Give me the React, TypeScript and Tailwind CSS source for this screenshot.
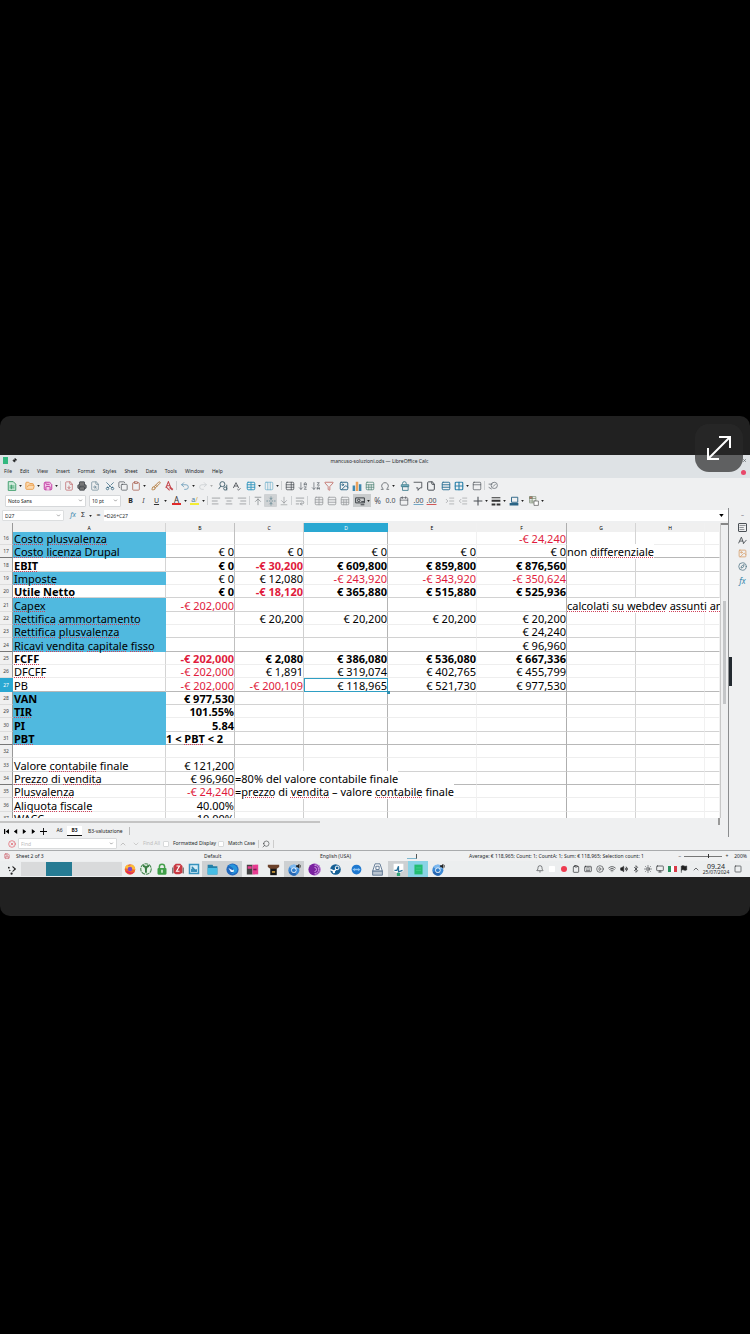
import React from "react";
import type { ReactNode } from "react";
import {
  AArrowDown, ArrowDownAZ, ArrowDownZA, Bell, Bluetooth, Brush, Calendar, ChevronDown, ChevronUp,
  CircleX, Clipboard, Compass, Copy, File, FileDown, FileSearch, Flag, FolderOpen, Funnel, Grid2x2, Image,
  IndentDecrease, IndentIncrease, MessageSquare, Monitor, Omega, PanelTop, Pin, Printer, Redo2,
  Save, Scissors, Search, SpellCheck, Square, Sun, Table, TableProperties, TextAlignCenter,
  TextAlignEnd, TextAlignStart, Undo2, Volume2, Wifi, WrapText, X, Columns3, Keyboard, Sheet, Rows3, ArrowUpToLine,
  ArrowDownToLine, FoldVertical, CirclePlay,
} from "lucide-react";

type Cell = { t: string; red?: boolean; left?: boolean };
type RowData = { n: number; label: string; bold?: boolean; blue?: boolean; line?: "mid" | "dark"; cells: (string | null)[] };

const rows: RowData[] = [
  { n: 16, label: "_Costo_ _plusvalenza_", blue: true, cells: [null, null, null, null, "-€ 24,240", null] },
  { n: 17, label: "_Costo_ _licenza_ Drupal", blue: true, line: "dark", cells: ["€ 0", "€ 0", "€ 0", "€ 0", "€ 0", "non _differenziale_"] },
  { n: 18, label: "_EBIT_", bold: true, line: "mid", cells: ["€ 0", "-€ 30,200", "€ 609,800", "€ 859,800", "€ 876,560", null] },
  { n: 19, label: "_Imposte_", blue: true, cells: ["€ 0", "€ 12,080", "-€ 243,920", "-€ 343,920", "-€ 350,624", null] },
  { n: 20, label: "_Utile_ _Netto_", bold: true, line: "mid", cells: ["€ 0", "-€ 18,120", "€ 365,880", "€ 515,880", "€ 525,936", null] },
  { n: 21, label: "_Capex_", blue: true, line: "mid", cells: ["-€ 202,000", null, null, null, null, "_calcolati_ _su_ _webdev_ _assunti_ _annualmente_"] },
  { n: 22, label: "_Rettifica_ _ammortamento_", blue: true, cells: [null, "€ 20,200", "€ 20,200", "€ 20,200", "€ 20,200", null] },
  { n: 23, label: "_Rettifica_ _plusvalenza_", blue: true, line: "mid", cells: [null, null, null, null, "€ 24,240", null] },
  { n: 24, label: "_Ricavi_ _vendita_ _capitale_ _fisso_", blue: true, line: "dark", cells: [null, null, null, null, "€ 96,960", null] },
  { n: 25, label: "_FCFF_", bold: true, cells: ["-€ 202,000", "€ 2,080", "€ 386,080", "€ 536,080", "€ 667,336", null] },
  { n: 26, label: "_DFCFF_", cells: ["-€ 202,000", "€ 1,891", "€ 319,074", "€ 402,765", "€ 455,799", null] },
  { n: 27, label: "PB", line: "dark", cells: ["-€ 202,000", "-€ 200,109", "€ 118,965", "€ 521,730", "€ 977,530", null] },
  { n: 28, label: "VAN", bold: true, blue: true, line: "mid", cells: ["€ 977,530", null, null, null, null, null] },
  { n: 29, label: "_TIR_", bold: true, blue: true, cells: ["101.55%", null, null, null, null, null] },
  { n: 30, label: "PI", bold: true, blue: true, line: "mid", cells: ["5.84", null, null, null, null, null] },
  { n: 31, label: "_PBT_", bold: true, blue: true, line: "dark", cells: ["1 < _PBT_ < 2", null, null, null, null, null] },
  { n: 32, label: "", cells: [null, null, null, null, null, null] },
  { n: 33, label: "Valore _contabile_ finale", line: "mid", cells: ["€ 121,200", null, null, null, null, null] },
  { n: 34, label: "_Prezzo_ di _vendita_", line: "dark", cells: ["€ 96,960", "=80% del _valore_ _contabile_ finale", null, null, null, null] },
  { n: 35, label: "_Plusvalenza_", cells: ["-€ 24,240", "=_prezzo_ di _vendita_ – valore _contabile_ finale", null, null, null, null] },
  { n: 36, label: "_Aliquota_ _fiscale_", cells: ["40.00%", null, null, null, null, null] },
  { n: 37, label: "_WACC_", cells: ["10.00%", null, null, null, null, null] },
];

const columns = [
  { name: "A", edge: "border-r-[#d4d4d4]" },
  { name: "B", edge: "border-r-[#c0c0c0]" },
  { name: "C", edge: "border-r-[#cfcfcf]" },
  { name: "D", edge: "border-r-[#b4b4b4]" },
  { name: "E", edge: "border-r-[#f1f1f1]" },
  { name: "F", edge: "border-r-[#aeaeae]" },
  { name: "G", edge: "border-r-[#d4d4d4]" },
  { name: "H", edge: "border-r-[#f1f1f1]" },
  { name: "", edge: "border-r-[#f1f1f1]" },
];

function Spelled({ text }: { text: string }) {
  return (
    <>
      {text.split("_").map((part, i) =>
        i % 2 ? (
          <span key={i} className="underline decoration-[#d0405a] decoration-dotted decoration-1 underline-offset-1">{part}</span>
        ) : (
          part
        ),
      )}
    </>
  );
}

function Caret({ dim }: { dim?: boolean }) {
  return (
    <button aria-label="More options" className="flex w-[5px] items-center justify-center">
      <svg viewBox="0 0 4 3" className={dim ? "h-[2px] w-[3px] text-[#aaa]" : "h-[2px] w-[3px] text-[#222]"}>
        <path d="M0 0h4L2 3z" fill="currentColor" />
      </svg>
    </button>
  );
}

function Tool({ name, children, color = "text-[#4a4f55]", active }: { name: string; children: ReactNode; color?: string; active?: boolean }) {
  return (
    <button
      aria-label={name}
      className={`flex h-[13px] w-[13px] shrink-0 items-center justify-center text-[8px] leading-none [&>svg]:size-[10px] ${color} ${active ? "rounded-[1px] bg-[#cfd2d4]" : ""}`}
    >
      {children}
    </button>
  );
}

function Group({ children, wide }: { children: ReactNode; wide?: boolean }) {
  return <div className={wide ? "ml-[3px] flex items-center" : "flex items-center"}>{children}</div>;
}

function Rule() {
  return <span className="-mx-px h-[9px] w-px shrink-0 bg-[#cdd0d2]" />;
}

function StandardBar() {
  return (
    <div className="flex h-[15px] items-center gap-0.5 pl-[5px]">
      <Group>
        <Tool name="New" color="text-[#3f9e6c]">
          <svg viewBox="0 0 16 16" fill="none" stroke="currentColor" strokeWidth="1.5"><path d="M2 1h8l4 4v10H2z" fill="#cfeadb" /><path d="M4 8h8M4 11h8M7 6v7" /></svg>
        </Tool>
        <Caret />
        <Tool name="Open" color="text-[#e8953c]"><FolderOpen fill="#fbd9ae" /></Tool>
        <Caret />
        <Tool name="Save" color="text-[#c43fa5]"><Save fill="#f3cdea" strokeWidth={2.4} /></Tool>
        <Caret />
      </Group>
      <Rule />
      <Group>
        <Tool name="Export as PDF" color="text-[#b9595c]"><FileDown strokeWidth={1.6} /></Tool>
        <Tool name="Print" color="text-[#42474c]"><Printer fill="#777" /></Tool>
        <Tool name="Print preview" color="text-[#64808f]"><FileSearch strokeWidth={1.6} /></Tool>
      </Group>
      <Group>
        <Tool name="Cut" color="text-[#34647e]"><Scissors className="-rotate-90" strokeWidth={1.8} /></Tool>
        <Tool name="Copy"><Copy strokeWidth={1.7} /></Tool>
        <Tool name="Paste" color="text-[#a75b4a]"><Clipboard strokeWidth={1.8} /></Tool>
        <Caret />
      </Group>
      <Group>
        <Tool name="Clone formatting" color="text-[#b3793a]"><Brush strokeWidth={2.2} /></Tool>
        <Tool name="Clear formatting" color="text-[#c5484e]">
          <svg viewBox="0 0 16 16" fill="none" stroke="currentColor" strokeWidth="1.700"><path d="M3 11 7 1l4 10M4.500 7.500h5" /><path d="M9 15 3 9" /><path d="M9 10l5 4" strokeWidth="3" /></svg>
        </Tool>
      </Group>
      <Rule />
      <Group>
        <Tool name="Undo" color="text-[#5c93b4]"><Undo2 strokeWidth={1.8} /></Tool>
        <Caret />
        <Tool name="Redo" color="text-[#c3c7ca]"><Redo2 strokeWidth={1.6} /></Tool>
        <Caret dim />
      </Group>
      <Group>
        <Tool name="Find and replace" color="text-[#446270]">
          <svg viewBox="0 0 16 16" fill="none" stroke="currentColor" strokeWidth="1.500"><circle cx="7" cy="5" r="4" /><path d="M4.500 8 1 13" /><circle cx="11.500" cy="12" r="2.500" /><path d="M14 6v9" /></svg>
        </Tool>
        <Tool name="Spelling"><SpellCheck strokeWidth={2} /></Tool>
      </Group>
      <Group>
        <Tool name="Rows" color="text-[#3d9ac0]"><Table strokeWidth={2.4} /></Tool>
        <Caret />
        <Tool name="Columns" color="text-[#64aac8]"><Columns3 strokeWidth={1.5} /></Tool>
        <Caret />
      </Group>
      <Rule />
      <Group>
        <Tool name="Sort"><TableProperties strokeWidth={1.8} /></Tool>
        <Tool name="Sort ascending" color="text-[#5d656b]"><ArrowDownAZ strokeWidth={1.7} /></Tool>
        <Tool name="Sort descending" color="text-[#5d656b]"><ArrowDownZA strokeWidth={1.7} /></Tool>
        <Tool name="AutoFilter" color="text-[#bb5a52]"><Funnel strokeWidth={1.8} /></Tool>
      </Group>
      <Group>
        <Tool name="Insert image" color="text-[#346c8a]"><Image strokeWidth={2.4} /></Tool>
        <Tool name="Insert chart" color="text-[#3d88b0]">
          <svg viewBox="0 0 16 16"><path d="M1 7h4v9H1z" fill="currentColor" /><path d="M6 1h4v15H6z" fill="#e8a15c" /><path d="M11 5h4v11h-4z" fill="currentColor" /></svg>
        </Tool>
        <Tool name="Pivot table" color="text-[#538879]"><Sheet strokeWidth={1.8} /></Tool>
      </Group>
      <Group>
        <Tool name="Special character"><Omega strokeWidth={1.7} /></Tool>
        <Caret />
      </Group>
      <Group>
        <Tool name="Hyperlink" color="text-[#4a8494]">
          <svg viewBox="0 0 16 16" fill="none" stroke="currentColor" strokeWidth="1.500"><path d="M4 6V4a3 3 0 0 1 6 0v2" /><path d="M2 6h12v3H2z" fill="#7fb8c4" /><path d="M4 9h9v6H4z" /></svg>
        </Tool>
        <Tool name="Comment">
          <svg viewBox="0 0 16 16" fill="none" stroke="currentColor" strokeWidth="1.400"><path d="M1 2h13v9h-3l-3 4v-4H5" /></svg>
        </Tool>
        <Tool name="Headers and footers"><File strokeWidth={2.4} /></Tool>
      </Group>
      <Group>
        <Tool name="Print area" color="text-[#39789b]"><Rows3 strokeWidth={2.4} /></Tool>
        <Tool name="Freeze rows and columns" color="text-[#2f83ab]"><Grid2x2 strokeWidth={2.8} /></Tool>
        <Caret />
        <Tool name="Split window"><PanelTop strokeWidth={1.6} /></Tool>
      </Group>
      <Rule />
      <Tool name="Draw functions" color="text-[#6b7379]">
        <svg viewBox="0 0 16 16" fill="none" stroke="currentColor" strokeWidth="1.300"><circle cx="10" cy="7" r="5" /><path d="M1 5h6M1 10l5 3M8 9l4-4" /></svg>
      </Tool>
    </div>
  );
}

function FormattingBar() {
  return (
    <div className="flex h-[15px] items-center gap-0.5 pl-[5px] text-[#222]">
      <label className="mr-px flex h-[12px] w-[81px] items-center rounded-[1px] border border-[#d6d8da] bg-white px-0.5">
        <input aria-label="Font name" defaultValue="Noto Sans" className="w-full min-w-0 text-[5px] leading-[8px] outline-none" />
        <ChevronDown className="size-[5px] shrink-0" />
      </label>
      <label className="mr-px flex h-[12px] w-[32px] items-center rounded-[1px] border border-[#d6d8da] bg-white px-0.5">
        <input aria-label="Font size" defaultValue="10 pt" className="w-full min-w-0 text-[5px] leading-[8px] outline-none" />
        <ChevronDown className="size-[5px] shrink-0" />
      </label>
      <Group>
        <Tool name="Bold" color="font-bold text-[#222]"><span className="text-[7px]">B</span></Tool>
        <Tool name="Italic" color="italic text-[#444]"><span className="text-[7px]">I</span></Tool>
        <Tool name="Underline" color="text-[#333] underline"><span className="text-[7px]">U</span></Tool>
        <Caret />
      </Group>
      <Group>
        <Tool name="Font color" color="text-[#333]"><span className="border-b-2 border-[#e02a2a] px-0.5 leading-[7px]">A</span></Tool>
        <Caret />
        <Tool name="Highlighting" color="text-[#4778a0]"><span className="border-b-2 border-[#f3ec33] px-px text-[7px] leading-[7px]">a<span className="text-[#d6a63a]">/</span></span></Tool>
        <Caret />
      </Group>
      <Rule />
      <Group>
        <Tool name="Align left" color="text-[#8a8e91]"><TextAlignStart strokeWidth={1.8} /></Tool>
        <Tool name="Align center" color="text-[#8a8e91]"><TextAlignCenter strokeWidth={1.8} /></Tool>
        <Tool name="Align right" color="text-[#8a8e91]"><TextAlignEnd strokeWidth={1.8} /></Tool>
      </Group>
      <Rule />
      <Group>
        <Tool name="Align top" color="text-[#7a7f83]"><ArrowUpToLine strokeWidth={1.7} /></Tool>
        <Tool name="Center vertically" active color="text-[#5a7f8c]"><FoldVertical strokeWidth={1.7} /></Tool>
        <Tool name="Align bottom" color="text-[#7a7f83]"><ArrowDownToLine strokeWidth={1.3} /></Tool>
      </Group>
      <Rule />
      <Tool name="Wrap text" color="text-[#7a7f83]"><WrapText strokeWidth={1.6} /></Tool>
      <Rule />
      <Group wide>
        <Tool name="Merge and center cells" color="text-[#9a9da0]"><Table strokeWidth={2} /></Tool>
        <Tool name="Merge cells" color="text-[#9a9da0]"><Rows3 strokeWidth={2} /></Tool>
        <Tool name="Unmerge cells" color="text-[#9a9da0]"><Sheet strokeWidth={2} /></Tool>
      </Group>
      <Group>
        <div className="flex bg-[#c9cccd]">
          <Tool name="Format as currency" color="text-[#3c4145]">
            <svg viewBox="0 0 16 16" fill="none" stroke="currentColor" strokeWidth="1.6"><path d="M1 3h14v8H1z" /><circle cx="6" cy="7" r="2" /><path d="M9 14h6M10 9h5" /></svg>
          </Tool>
          <Caret />
        </div>
        <Tool name="Format as percent" color="text-[#4a4f55]">%</Tool>
        <Tool name="Format as number" color="text-[#4a4f55]"><span className="text-[7px]">0.0</span></Tool>
        <Tool name="Format as date"><Calendar strokeWidth={1.6} /></Tool>
      </Group>
      <Group>
        <Tool name="Add decimal place"><span className="text-[7px] underline decoration-[#71a7c4]">.00</span></Tool>
        <Tool name="Delete decimal place"><span className="text-[7px] underline decoration-[#d05858]">.00</span></Tool>
      </Group>
      <Group wide>
        <Tool name="Increase indent" color="text-[#9a9da0]"><IndentIncrease strokeWidth={1.6} /></Tool>
        <Tool name="Decrease indent" color="text-[#9a9da0]"><IndentDecrease strokeWidth={1.6} /></Tool>
      </Group>
      <Group>
        <Tool name="Borders"><svg viewBox="0 0 16 16" stroke="currentColor" strokeWidth="1.7"><path d="M8 1v14M1 8h14" /></svg></Tool>
        <Caret />
        <Tool name="Border style" color="text-[#333]"><svg viewBox="0 0 16 16" fill="currentColor"><path d="M1 2h14v1.500H1zM1 6h14v3H1zM1 12h6v3H1zM9 12h6v3H9z" /></svg></Tool>
        <Caret />
        <Tool name="Background color" color="text-[#2b6485]"><svg viewBox="0 0 16 16" fill="none" stroke="currentColor"><path d="M4 2h10v8H4z" strokeWidth="1.5" /><path d="M1 13h14" strokeWidth="4" /></svg></Tool>
        <Caret />
      </Group>
      <Group>
        <Tool name="Conditional formatting" color="text-[#6a7d5f]"><svg viewBox="0 0 16 16" fill="none" stroke="currentColor"><path d="M1 1h10v10H1zM1 4h10M1 8h10M5 1v10" /><path d="M1 1h4v3H1z" fill="#d67171" /><path d="M8 8h7v7H8z" fill="#fff" stroke="#444" /></svg></Tool>
        <Caret />
      </Group>
    </div>
  );
}

function FormulaBar() {
  return (
    <div className="flex h-[15px] items-center gap-0.5 pl-0.5 text-[5px]">
      <label className="flex h-[11px] w-[62px] items-center rounded-[1px] border border-[#dcdedf] bg-white px-0.5">
        <input aria-label="Cell reference" defaultValue="D27" className="w-full min-w-0 leading-[8px] outline-none" />
        <ChevronDown className="size-[5px] shrink-0" />
      </label>
      <button aria-label="Function wizard" className="w-[12px] pl-0.5 text-[7px] italic text-[#3b88ae]">fx</button>
      <button aria-label="Sum" className="w-[6px] text-[7px]">Σ</button>
      <Caret />
      <button aria-label="Formula" className="w-[7px] text-[7px]">=</button>
      <label className="flex h-[11px] grow items-center bg-white">
        <input aria-label="Formula input" defaultValue="=D26+C27" className="w-full leading-[8px] outline-none" />
        <svg viewBox="0 0 6 4" className="mx-1 h-[3px] w-[5px]"><path d="M0 0h6L3 4z" /></svg>
      </label>
    </div>
  );
}

function toCell(text: string, col: number): Cell {
  return { t: text, red: text.startsWith("-"), left: col === 5 || text.startsWith("=") || text.startsWith("1 <") };
}

function Grid() {
  return (
    <div className="h-[295px] min-w-0 grow overflow-hidden bg-white">
      <table className="w-full table-fixed border-separate border-spacing-0 text-[11px] leading-[10px] text-black">
        <colgroup>
          <col className="w-[13px]" />
          <col className="w-[153px]" />
          <col className="w-[69px]" />
          <col className="w-[69px]" />
          <col className="w-[84px]" />
          <col className="w-[89px]" />
          <col className="w-[90px]" />
          <col className="w-[69px]" />
          <col className="w-[69px]" />
          <col />
        </colgroup>
        <thead>
          <tr className="h-[9px] bg-[#f0f0f0] text-[5px] leading-[8px]">
            <th className="border-r border-r-[#999] p-0" />
            {columns.map((c, i) => (
              <th key={i} scope="col" className={c.name === "D" ? "bg-[#2aa8d2] p-0 font-normal text-white" : `border-r p-0 font-normal ${c.edge}`}>{c.name}</th>
            ))}
          </tr>
        </thead>
        <tbody>
          {rows.map((r, ri) => {
            const line = r.line === "dark" ? "border-b-[#b8b8b8]" : r.line === "mid" ? "border-b-[#d2d2d2]" : "border-b-[#eeeeee]";
            return (
              <tr key={r.n} className={ri % 3 === 2 ? "h-[14px]" : "h-[13px]"}>
                <th scope="row" className={`border-r border-b p-0 text-[5px] leading-[8px] font-normal ${r.n === 27 ? "border-[#2aa8d2] bg-[#2aa8d2] text-white" : r.line === "dark" ? "border-r-[#999] border-b-[#777] bg-[#f0f0f0] text-[#444]" : "border-r-[#999] border-b-[#ddd] bg-[#f0f0f0] text-[#444]"}`}>{r.n}</th>
                <td className={`border-r border-b p-0 pt-0.5 pl-px whitespace-nowrap ${r.bold ? "font-bold" : ""} ${r.blue ? "border-[#50b9df] bg-[#50b9df]" : `border-r-[#d4d4d4] ${line}`}`}>
                  <Spelled text={r.label} />
                </td>
                {[...r.cells, null, null].map((raw, ci) => {
                  const edge = columns[ci + 1].edge;
                  const cell = raw === null ? null : toCell(raw, ci);
                  if (r.n === 27 && ci === 2) {
                    return (
                      <td key={ci} className="relative p-0 pt-px pr-px text-right whitespace-nowrap outline-1 -outline-offset-1 outline-[#2f9fc4]">
                        {raw}
                        <span className="absolute -right-0.5 -bottom-0.5 size-[3px] bg-[#2f8fb0]" />
                      </td>
                    );
                  }
                  return (
                    <td key={ci} className={`border-r border-b p-0 pt-0.5 whitespace-nowrap ${edge} ${line} ${r.bold ? "font-bold" : ""} ${cell?.red ? "text-[#e01b3c]" : ""} ${cell?.left ? "text-left" : "text-right"}`}>
                      {cell && (cell.left ? <span className={cell.t.startsWith("1") ? "" : "relative bg-white"}><Spelled text={cell.t} /></span> : cell.t)}
                    </td>
                  );
                })}
              </tr>
            );
          })}
        </tbody>
      </table>
    </div>
  );
}

function SheetTabs() {
  return (
    <div className="flex h-[12px] items-center text-[5px] text-[#222]">
      <div className="flex w-[52px] items-center gap-[4px] pl-[4px] text-[#111]">
        <button aria-label="First sheet"><svg viewBox="0 0 6 6" className="size-[5px]"><path d="M0 0h1.500v6H0zM6 0v6L2 3z" /></svg></button>
        <button aria-label="Previous sheet"><svg viewBox="0 0 6 6" className="size-[5px]"><path d="M5 0v6L1 3z" /></svg></button>
        <button aria-label="Next sheet"><svg viewBox="0 0 6 6" className="size-[5px]"><path d="M1 0v6l4-3z" /></svg></button>
        <button aria-label="Last sheet"><svg viewBox="0 0 6 6" className="size-[5px]"><path d="M1 0v6l4-3z" /></svg></button>
        <button aria-label="Add sheet"><svg viewBox="0 0 8 8" className="size-[7px]"><path d="M3.500 0h1v3.500H8v1H4.500V8h-1V4.500H0v-1h3.500z" /></svg></button>
      </div>
      <button className="w-[15px] text-center">A6</button>
      <button className="h-[10px] w-[15px] border-b border-[#111] bg-white text-center font-bold">B3</button>
      <button className="h-[8px] border-r border-[#bbb] px-[6px] leading-[8px]">B3-valutazione</button>
    </div>
  );
}

function Screen() {
  return (
    <section aria-label="Spreadsheet" className="flex flex-col bg-[#eff0f1] text-[#26292c]">
      <header className="bg-[#dee2e5]">
        <div className="flex h-[11px] items-center px-[3px]">
          <span className="h-[7px] w-[5px] bg-[#33b880]" />
          <Pin className="ml-[4px] size-[5px] rotate-45" fill="#222" />
          <h1 className="grow text-center text-[5px] leading-[8px]">mancuso-soluzioni.ods — LibreOffice Calc</h1>
          <button aria-label="Close"><X className="size-[5px]" /></button>
        </div>
        <nav className="flex h-[12px] items-center gap-[8px] px-[4px] text-[5px]">
          {["File", "Edit", "View", "Insert", "Format", "Styles", "Sheet", "Data", "Tools", "Window", "Help"].map((m) => (
            <button key={m}>{m}</button>
          ))}
          <button aria-label="Close document" className="ml-auto size-[5px] rounded-full bg-[#e8486a]" />
        </nav>
      </header>
      <StandardBar />
      <FormattingBar />
      <div className="flex">
        <div className="flex min-w-0 grow flex-col">
          <FormulaBar />
          <div className="flex">
            <Grid />
            <div className="flex w-[8px] shrink-0 flex-col items-center border-l border-[#c8c8c8]">
              <span className="h-[78px] w-full border-t-2 border-[#888]" />
              <span className="h-[103px] w-[3px] bg-[#c4c6c8]" />
            </div>
          </div>
          <div className="flex h-[7px] items-center justify-between pr-[8px]">
            <span className="h-[2px] w-[320px] bg-[#c4c4c4]" />
            <span className="h-[7px] w-0.5 bg-[#999]" />
          </div>
          <SheetTabs />
        </div>
        <aside className="flex w-[22px] shrink-0 border-l border-[#8b8d8f]">
          <button aria-label="Hide sidebar" className="mt-[149px] h-[29px] w-[3px] shrink-0 bg-[#232a30]" />
          <div className="flex grow flex-col items-center gap-[4px] pt-[3px] pl-[3px] text-[#4b5156] [&_svg]:size-[9px]">
            <button aria-label="Sidebar settings" className="text-[6px] leading-[8px]">–</button>
            <button aria-label="Properties"><TextAlignStart className="rounded-[1px] border border-current" /></button>
            <button aria-label="Styles"><svg viewBox="0 0 16 16" fill="none" stroke="currentColor" strokeWidth="1.600"><path d="M1 13 6 2l4 11M3 9h6M9 14l6-7" /></svg></button>
            <button aria-label="Gallery" className="text-[#d59a62]"><Image /></button>
            <button aria-label="Navigator" className="text-[#4f7484]"><Compass /></button>
            <button aria-label="Functions" className="text-[8px] leading-[12px] text-[#3b88ae] italic">fx</button>
          </div>
        </aside>
      </div>
      <div className="flex h-[13px] items-center pl-[8px] text-[5px]">
        <button aria-label="Close find bar" className="text-[#e05864]"><CircleX className="size-[8px]" /></button>
        <label className="ml-0.5 flex h-[11px] w-[99px] items-center rounded-[1px] border border-[#d8dadb] bg-white px-0.5">
          <input aria-label="Find" placeholder="Find" className="w-full min-w-0 leading-[8px] outline-none placeholder:text-[#bbb]" />
          <ChevronDown className="size-[5px]" />
        </label>
        <button aria-label="Find previous" className="ml-0.5 text-[#aaa]"><ChevronUp className="size-[8px]" /></button>
        <button aria-label="Find next" className="ml-[5px] text-[#bbb]"><ChevronDown className="size-[8px]" /></button>
        <button className="ml-0.5 w-[19px] text-[#bbb]">Find All</button>
        <label className="ml-0.5 flex w-[55px] items-center gap-[4px] whitespace-nowrap">
          <input type="checkbox" className="size-[6px] appearance-none rounded-[1px] border border-[#d8dadb] bg-white" />Formatted Display
        </label>
        <label className="flex w-[40px] items-center gap-[4px] whitespace-nowrap">
          <input type="checkbox" className="size-[6px] appearance-none rounded-[1px] border border-[#d8dadb] bg-white" />Match Case
        </label>
        <button aria-label="Find and replace" className="border-x border-[#ccc] px-[3px]"><Search className="size-[8px] -scale-x-100" strokeWidth={1.6} /></button>
      </div>
      <footer className="flex h-[11px] items-center border-t border-[#a9abad] pl-[4px] text-[5px] leading-[8px] whitespace-nowrap">
        <Save className="size-[6px] text-[#c03846]" />
        <span className="ml-[6px] w-[188px]">Sheet 2 of 3</span>
        <span className="w-[116px]">Default</span>
        <span className="w-[87px]">English (USA)</span>
        <span className="h-[5px] w-[10px] border-r border-b border-r-[#555] border-b-[#7fb8d0]" />
        <span className="ml-[52px]">Average: € 118,965; Count: 1; CountA: 1; Sum: € 118,965; Selection count: 1</span>
        <div className="mr-[3px] ml-auto flex items-center gap-[3px]">
          <button aria-label="Zoom out">−</button>
          <input aria-label="Zoom" type="range" defaultValue={64} className="h-px w-[38px] appearance-none bg-[#777] [&::-webkit-slider-thumb]:h-[4px] [&::-webkit-slider-thumb]:w-px [&::-webkit-slider-thumb]:appearance-none [&::-webkit-slider-thumb]:bg-[#333]" />
          <button aria-label="Zoom in">+</button>
          <span className="ml-[3px]">200%</span>
        </div>
      </footer>
      <Taskbar />
    </section>
  );
}

function TaskButton({ name, children, open }: { name: string; children: ReactNode; open?: "grey" | "active" }) {
  const look = open === "active" ? "w-[20px] bg-[#89d3e6]" : open === "grey" ? "w-[20px] bg-[#cdd0d2]" : "w-[21px]";
  return (
    <button aria-label={name} className={`flex h-[16px] shrink-0 items-center justify-center [&>svg]:size-[13px] ${look}`}>
      {children}
    </button>
  );
}

function Launcher({ name, children }: { name: string; children: ReactNode }) {
  return <button aria-label={name} className="flex w-[16px] shrink-0 items-center justify-center [&>svg]:size-[12px]">{children}</button>;
}

function Chromium() {
  return (
    <svg viewBox="0 0 20 20">
      <circle cx="9" cy="11" r="8.500" fill="#3d8ad6" />
      <path d="M9 11 2 6a8.500 8.500 0 0 1 15 2z" fill="#7db8ee" />
      <path d="M9 11l4 7.500A8.500 8.500 0 0 1 1 14z" fill="#2767b2" />
      <circle cx="9" cy="11" r="4" fill="#fff" />
      <circle cx="9" cy="11" r="3" fill="#2f7dcb" />
      <path d="M13 4h2l2-2v6l-2-2h-2z" fill="#222" stroke="#222" />
      <path d="M19 3v4" stroke="#222" />
    </svg>
  );
}

function Taskbar() {
  return (
    <div className="flex h-[16px] items-center bg-[#eceeef]">
      <button aria-label="Application launcher" className="ml-[7px] flex w-[14px]">
        <svg viewBox="0 0 12 12" className="size-[11px]" fill="#222"><circle cx="2" cy="4" r="1" /><circle cx="5" cy="10.500" r="1.200" /><circle cx="3" cy="7" r=".8" /><path d="M6 2l4 3.500L6 9V7.500L8 5.500 6 3.500z" /></svg>
      </button>
      <div className="flex h-[14px] w-[101px] bg-[#d9dadb]">
        <button aria-label="Desktop 1" className="w-1/4" />
        <button aria-label="Desktop 2" className="w-1/4 bg-[#267b93]" />
        <button aria-label="Desktop 3" className="w-1/4" />
        <button aria-label="Desktop 4" className="w-1/4" />
      </div>
      <div className="flex">
        <Launcher name="Firefox">
          <svg viewBox="0 0 16 16"><circle cx="8" cy="8.500" r="7" fill="#f2652d" /><path d="M1 7a7 7 0 0 1 4-5l1 2 5-2c3 2 4 4 4 7z" fill="#fdbb37" /><path d="M2 10a7 7 0 0 0 12 2l-4 1z" fill="#e0245f" /><circle cx="8" cy="8" r="3" fill="#8146c9" /></svg>
        </Launcher>
        <Launcher name="Torrent">
          <svg viewBox="0 0 16 16"><circle cx="8" cy="8" r="7" fill="#e7f2e8" stroke="#4c8a55" strokeWidth="1.500" strokeDasharray="5 1" /><path d="M4 4c4 0 4 3 4 9M12 4c-3 0-4 2-4 5" stroke="#397d43" strokeWidth="2.500" fill="none" /></svg>
        </Launcher>
        <Launcher name="Passwords">
          <svg viewBox="0 0 16 16"><path d="M4.500 8V5a3.500 3.500 0 0 1 7 0v3" stroke="#45a04c" strokeWidth="2" fill="none" /><rect x="2" y="6.500" width="12" height="9" rx="1.500" fill="#3f9f48" /><path d="M7 9h2v4H7z" fill="#e6f5e7" /></svg>
        </Launcher>
        <Launcher name="Archive">
          <svg viewBox="0 0 16 16"><path d="M2 4l3-3h6l3 3v9l-4 2H5l-3-2z" fill="#c83a43" /><path d="M6 4h4l-4 7h4" stroke="#fff" strokeWidth="1.500" fill="none" /><path d="M1 6v8M15 6v8" stroke="#666" strokeWidth="1.500" /></svg>
        </Launcher>
        <Launcher name="System monitor">
          <svg viewBox="0 0 16 16"><path d="M1 1h14v14H1z" fill="#3793be" /><path d="M3 3h10v10H3z" fill="#d8eef7" /><path d="M4 12V8l3-2 2 3 3-1v4z" fill="#3a92bb" /><path d="M5 5l6 6" stroke="#2e86b0" strokeWidth="1.500" /></svg>
        </Launcher>
      </div>
      <div className="flex">
        <TaskButton name="Files" open="grey"><svg viewBox="0 0 16 16"><path d="M2 2h6l1 2h5v10H2z" fill="#237fa7" /><path d="M2 6h12v8H2z" fill="#46bde5" /></svg></TaskButton>
        <TaskButton name="Thunderbird" open="grey"><svg viewBox="0 0 16 16"><circle cx="8" cy="8" r="7.500" fill="#2069be" /><path d="M3 6l5 3 4-3v5H6z" fill="#e9f4fc" /><path d="M3 3c5-3 11 0 11 5a6 6 0 0 1-8 5c5-1 6-7-3-10z" fill="#2695dc" /></svg></TaskButton>
        <TaskButton name="Video editor"><svg viewBox="0 0 16 16"><path d="M1 2h7v12H1z" fill="#444" /><path d="M8 2h7v12H8z" fill="#e63d91" /><path d="M2 4h5v3H2z" fill="#e63d91" /><path d="M9 7h4v2H9z" fill="#7d1c50" /></svg></TaskButton>
        <TaskButton name="Assistant"><svg viewBox="0 0 16 16"><path d="M4 6h8v9H4z" fill="#151515" /><path d="M1 2h14v3l-3 2H4L1 5z" fill="#6c422b" /><path d="M6 10h4v2H6z" fill="#d4a03d" /></svg></TaskButton>
        <TaskButton name="Chromium" open="grey"><Chromium /></TaskButton>
        <TaskButton name="Tor browser"><svg viewBox="0 0 16 16" fill="none"><circle cx="8" cy="8" r="7.500" fill="#7b22a0" /><path d="M8 3a5 5 0 0 1 0 10M8 5.500a2.500 2.500 0 0 1 0 5M8 1a7 7 0 0 1 0 14" stroke="#dbb2ec" strokeWidth="1" /></svg></TaskButton>
        <TaskButton name="Steam"><svg viewBox="0 0 16 16"><circle cx="8" cy="8" r="6.500" fill="#155f95" /><circle cx="10" cy="6" r="2.300" fill="none" stroke="#fff" strokeWidth="1.200" /><path d="M1.500 8l5 2 2-2" stroke="#fff" strokeWidth="1.800" fill="none" /><circle cx="6" cy="11" r="1.500" fill="#fff" /></svg></TaskButton>
        <TaskButton name="TeamViewer"><svg viewBox="0 0 16 16"><circle cx="8" cy="8" r="6" fill="#1f79d0" /><path d="M3 8l3-2v1.200h4V6l3 2-3 2V8.800H6V10z" fill="#8cc4f4" /></svg></TaskButton>
        <TaskButton name="Disks"><svg viewBox="0 0 16 16" fill="#f5f7f9" stroke="#4b6684"><path d="M5 1h6l3 9H2z" /><path d="M2 10h12v5H2z" fill="#b9c4d0" /><path d="M6 4h4v4H6z" /></svg></TaskButton>
        <TaskButton name="Messages" open="grey"><svg viewBox="0 0 16 16"><path d="M2 1h12v9l-6 3-6-3z" fill="#fff" /><path d="M3 9h3l2-5v7l5-2" stroke="#29719a" strokeWidth="1.500" fill="none" /><path d="M6 12h4v4H6z" fill="#2fa475" /></svg></TaskButton>
        <TaskButton name="LibreOffice Calc" open="active"><svg viewBox="0 0 16 16"><path d="M3 2h10v12H3z" fill="#22bd72" /><path d="M5 6h6M5 9h6" stroke="#45cf8c" /></svg></TaskButton>
        <TaskButton name="Chromium audio"><Chromium /></TaskButton>
      </div>
      <div className="mr-[6px] ml-auto flex items-center [&_svg]:size-[8px] [&>button]:flex [&>button]:w-[12px] [&>button]:justify-center">
        <button aria-label="Notifications"><Bell strokeWidth={1.7} /></button>
        <button aria-label="Clipboard" className="text-white"><Square fill="#fff" strokeWidth={0} /></button>
        <button aria-label="Recording"><span className="size-[6px] rounded-full bg-[#ee3b50]" /></button>
        <button aria-label="Clipboard history"><Clipboard /></button>
        <button aria-label="Keyboard"><Keyboard /></button>
        <button aria-label="Media"><CirclePlay strokeWidth={1.7} /></button>
        <button aria-label="Network"><Wifi /></button>
        <button aria-label="Volume"><Volume2 fill="#222" /></button>
        <button aria-label="Bluetooth"><Bluetooth /></button>
        <button aria-label="Brightness"><Sun /></button>
        <button aria-label="Display"><Monitor /></button>
        <button aria-label="Keyboard layout"><span className="h-[6px] w-[9px] border-x-3 border-l-[#26905b] border-r-[#d93a48] bg-white" /></button>
        <button aria-label="Player"><Flag fill="#222" /></button>
        <button aria-label="Show hidden icons"><ChevronUp /></button>
        <time className="w-[28px] text-center">
          <span className="block text-[7px] leading-[7px]">09.24</span>
          <span className="block text-[5px] leading-[5px]">25/07/2024</span>
        </time>
        <button aria-label="Show desktop" className="ml-0.5"><Square strokeWidth={1.8} /></button>
      </div>
    </div>
  );
}

export default function App() {
  return (
    <main className="flex min-h-screen items-center bg-black pb-0.5 font-['Noto_Sans','Open_Sans',sans-serif]">
      <article className="relative w-full overflow-hidden rounded-[10px] bg-[#212121] py-[39px]">
        <Screen />
        <button aria-label="Expand" className="absolute top-2 right-[7px] flex size-12 items-center justify-center rounded-[14px] bg-[#2a2a2a]/70 text-white">
          <svg viewBox="0 0 24 24" className="size-6" fill="none" stroke="currentColor" strokeWidth="2"><path d="M1 23 23 1M12 1h11v11M1 12v11h11" /></svg>
        </button>
      </article>
    </main>
  );
}
